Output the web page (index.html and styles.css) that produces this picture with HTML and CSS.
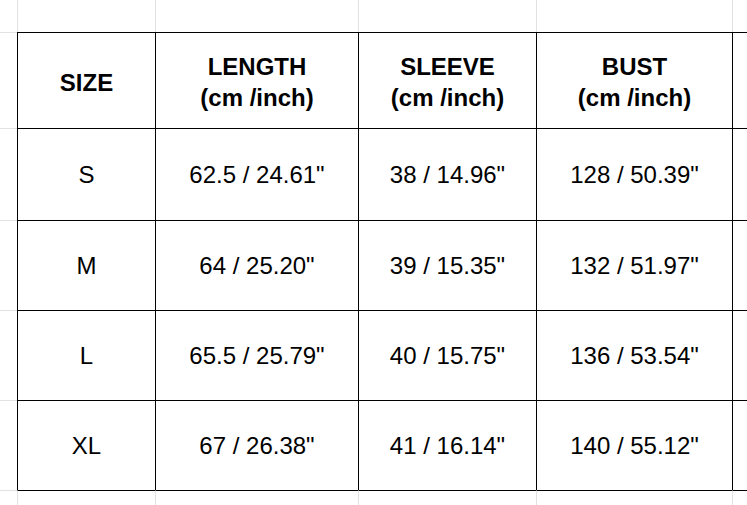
FILE: index.html
```html
<!DOCTYPE html>
<html lang="en">
<head>
<meta charset="utf-8">
<title>Size chart</title>
<link rel="stylesheet" href="styles.css">
</head>
<body>
<table class="sheet">
  <colgroup>
    <col class="c-gutter"><col class="c-size"><col class="c-length"><col class="c-sleeve"><col class="c-bust"><col class="c-extra">
  </colgroup>
  <tr class="r-top">
    <td class="gutter"></td><td class="edge"></td><td class="edge"></td><td class="edge"></td><td class="edge"></td><td class="edge"></td>
  </tr>
  <tr class="r-head">
    <td class="gutter side"></td>
    <th class="cell">SIZE</th>
    <th class="cell">LENGTH<br>(cm /inch)</th>
    <th class="cell">SLEEVE<br>(cm /inch)</th>
    <th class="cell">BUST<br>(cm /inch)</th>
    <th class="cell"></th>
  </tr>
  <tr class="r-s">
    <td class="gutter side"></td>
    <td class="cell">S</td><td class="cell">62.5 / 24.61"</td><td class="cell">38 / 14.96"</td><td class="cell">128 / 50.39"</td><td class="cell"></td>
  </tr>
  <tr class="r-m">
    <td class="gutter side"></td>
    <td class="cell">M</td><td class="cell">64 / 25.20"</td><td class="cell">39 / 15.35"</td><td class="cell">132 / 51.97"</td><td class="cell"></td>
  </tr>
  <tr class="r-l">
    <td class="gutter side"></td>
    <td class="cell">L</td><td class="cell">65.5 / 25.79"</td><td class="cell">40 / 15.75"</td><td class="cell">136 / 53.54"</td><td class="cell"></td>
  </tr>
  <tr class="r-xl">
    <td class="gutter side"></td>
    <td class="cell">XL</td><td class="cell">67 / 26.38"</td><td class="cell">41 / 16.14"</td><td class="cell">140 / 55.12"</td><td class="cell"></td>
  </tr>
  <tr class="r-bottom">
    <td class="gutter side"></td>
    <td class="edge closing"></td><td class="edge closing"></td><td class="edge closing"></td><td class="edge closing"></td><td class="edge closing"></td>
  </tr>
</table>
</body>
</html>
```
FILE: styles.css
```css
html, body {
  margin: 0;
  padding: 0;
  background: #ffffff;
  overflow: hidden;
  width: 747px;
  height: 505px;
}

.sheet {
  border-collapse: separate;
  border-spacing: 0;
  table-layout: fixed;
  width: 747px;
  font-family: "Liberation Sans", Arial, sans-serif;
  color: #000000;
}

.c-gutter { width: 17px; }
.c-size { width: 138px; }
.c-length { width: 203px; }
.c-sleeve { width: 178px; }
.c-bust { width: 196px; }
.c-extra { width: 15px; }

.sheet td,
.sheet th {
  box-sizing: border-box;
  padding: 0;
  text-align: center;
  vertical-align: middle;
}

.r-top td { height: 32px; }
.r-head th, .r-head td { height: 96px; }
.r-s td { height: 92px; }
.r-m td, .r-l td, .r-xl td { height: 90px; }
.r-bottom td { height: 15px; }

.edge {
  border-left: 1px solid #e2e2e2;
}

.side {
  border-top: 1px solid #e2e2e2;
}

.cell {
  border-left: 1px solid #000000;
  border-top: 1px solid #000000;
  font-size: 24px;
  font-weight: normal;
  line-height: 31px;
  padding-top: 5px;
}

.r-head .cell {
  font-weight: bold;
  padding-top: 3px;
}

.closing {
  border-top: 1px solid #000000;
}
```
